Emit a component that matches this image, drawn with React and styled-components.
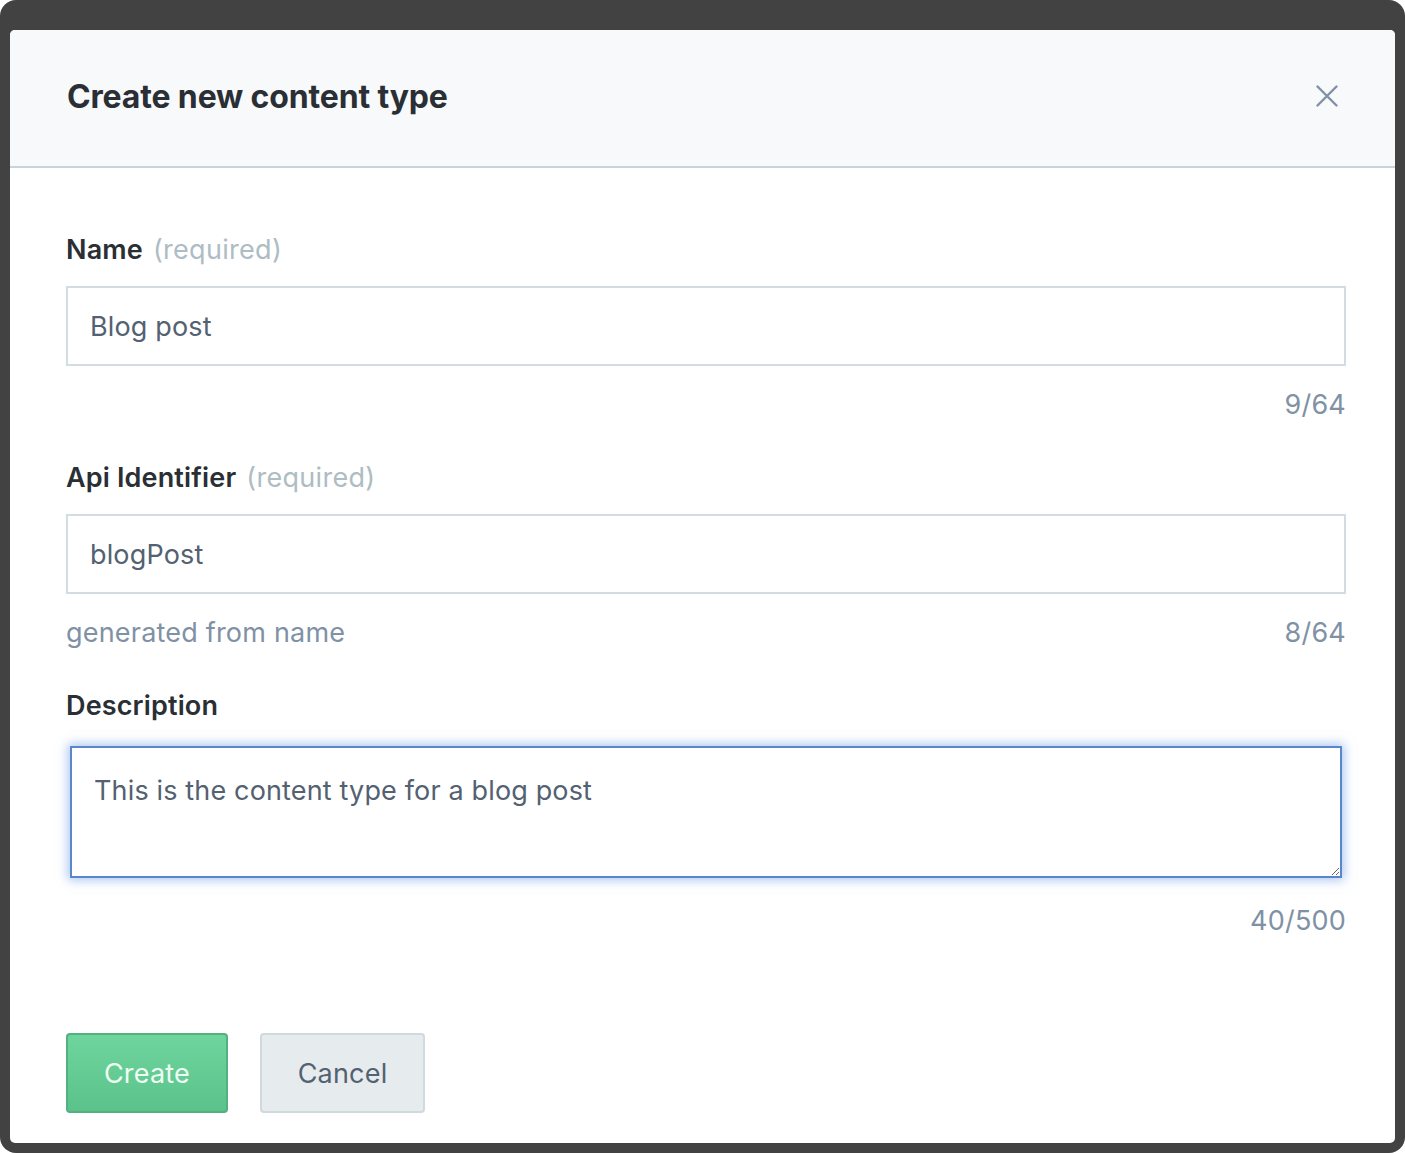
import React, { useEffect, useRef, useState } from "react";
import styled, { createGlobalStyle } from "styled-components";

const GlobalStyle = createGlobalStyle`
  html, body {
    margin: 0;
    padding: 0;
    background: #ffffff;
  }
  * {
    box-sizing: border-box;
  }
`;

const FONT = `Inter, "Noto Sans", "Liberation Sans", sans-serif`;

const Frame = styled.div`
  width: 1405px;
  height: 1153px;
  background: #424242;
  border-radius: 16px;
  padding: 30px 10px 10px 10px;
  font-family: ${FONT};
`;

const Modal = styled.div`
  height: 100%;
  background: #ffffff;
  border-radius: 5px;
  overflow: hidden;
  display: flex;
  flex-direction: column;
`;

const Header = styled.div`
  height: 138px;
  flex-shrink: 0;
  background: #f7f9fa;
  border-bottom: 2px solid #c8d4da;
  display: flex;
  align-items: center;
  justify-content: space-between;
  padding: 0 56px 4px 57px;
`;

const Title = styled.h1`
  margin: 0;
  font-size: 32px;
  font-weight: 700;
  color: #2a2f35;
  letter-spacing: -0.15px;
`;

const CloseBtn = styled.button`
  border: 0;
  background: transparent;
  padding: 0;
  width: 24px;
  height: 24px;
  display: flex;
  align-items: center;
  justify-content: center;
  cursor: pointer;
`;

const Body = styled.div`
  padding: 64px 49px 0 56px;
  display: flex;
  flex-direction: column;
`;

const Field = styled.div`
  display: flex;
  flex-direction: column;
  & + & {
    margin-top: 37px;
  }
`;

const Label = styled.label`
  font-size: 27px;
  line-height: 36px;
  font-weight: 600;
  color: #2a2f35;
  letter-spacing: 0.15px;
  margin-bottom: 18px;
`;

const Hint = styled.span`
  font-weight: 400;
  color: #aebcc3;
  margin-left: 10px;
  letter-spacing: 0.3px;
`;

const TextInput = styled.input`
  height: 80px;
  width: 100%;
  border: 2px solid #d3dce0;
  border-radius: 0;
  background: #ffffff;
  padding: 0 22px;
  font-family: ${FONT};
  font-size: 27px;
  letter-spacing: 0.15px;
  color: #536171;
  outline: none;
`;

const TextArea = styled.textarea`
  display: block;
  margin: 4px;
  width: calc(100% - 8px);
  height: 132px;
  border: 2px solid #5a86cc;
  border-radius: 0;
  box-shadow: 0 0 10px 2px rgba(84, 138, 230, 0.5);
  padding: 25px 22px;
  font-family: ${FONT};
  font-size: 27px;
  letter-spacing: 0.15px;
  line-height: 36px;
  color: #536171;
  caret-color: #3a3f45;
  outline: none;
  resize: vertical;
`;

const HelpRow = styled.div`
  display: flex;
  justify-content: space-between;
  margin-top: 21px;
  font-size: 27px;
  letter-spacing: 0.2px;
  line-height: 36px;
  color: #8091a5;
`;

const Counter = styled.span`
  margin-left: auto;
`;

const Actions = styled.div`
  display: flex;
  gap: 32px;
  margin-top: 94px;
`;

const Button = styled.button`
  height: 80px;
  padding: 0 30px;
  border-radius: 4px;
  font-family: ${FONT};
  font-size: 27px;
  letter-spacing: 0.2px;
  cursor: pointer;
  border: 2px solid ${(p) => (p.$primary ? "#53b07f" : "#d0d9de")};
  background: ${(p) =>
    p.$primary
      ? "linear-gradient(to bottom, #6dd59d, #5cc28b)"
      : "#e6ebee"};
  color: ${(p) => (p.$primary ? "#eefff4" : "#536171")};
  min-width: ${(p) => (p.$primary ? "162px" : "165px")};
`;

const CloseIcon = () => (
  <svg width="22" height="22" viewBox="0 0 22 22">
    <path
      d="M1.5 1.5 L20.5 20.5 M20.5 1.5 L1.5 20.5"
      stroke="#8091a5"
      strokeWidth="2.4"
      strokeLinecap="round"
    />
  </svg>
);

const App = () => {
  const [name, setName] = useState("Blog post");
  const [apiId, setApiId] = useState("blogPost");
  const [desc, setDesc] = useState("This is the content type for a blog post");
  const areaRef = useRef(null);

  useEffect(() => {
    const el = areaRef.current;
    if (el) {
      el.focus();
      el.setSelectionRange(el.value.length, el.value.length);
    }
  }, []);

  return (
    <>
      <GlobalStyle />
      <Frame>
        <Modal>
          <Header>
            <Title>Create new content type</Title>
            <CloseBtn aria-label="Close">
              <CloseIcon />
            </CloseBtn>
          </Header>
          <Body>
            <Field>
              <Label>
                Name<Hint>(required)</Hint>
              </Label>
              <TextInput value={name} onChange={(e) => setName(e.target.value)} />
              <HelpRow>
                <Counter>{name.length}/64</Counter>
              </HelpRow>
            </Field>
            <Field>
              <Label>
                Api Identifier<Hint>(required)</Hint>
              </Label>
              <TextInput value={apiId} onChange={(e) => setApiId(e.target.value)} />
              <HelpRow>
                <span>generated from name</span>
                <Counter>{apiId.length}/64</Counter>
              </HelpRow>
            </Field>
            <Field>
              <Label>Description</Label>
              <TextArea
                ref={areaRef}
                value={desc}
                onChange={(e) => setDesc(e.target.value)}
              />
              <HelpRow>
                <Counter>{desc.length}/500</Counter>
              </HelpRow>
            </Field>
            <Actions>
              <Button $primary>Create</Button>
              <Button>Cancel</Button>
            </Actions>
          </Body>
        </Modal>
      </Frame>
    </>
  );
};

export default App;
